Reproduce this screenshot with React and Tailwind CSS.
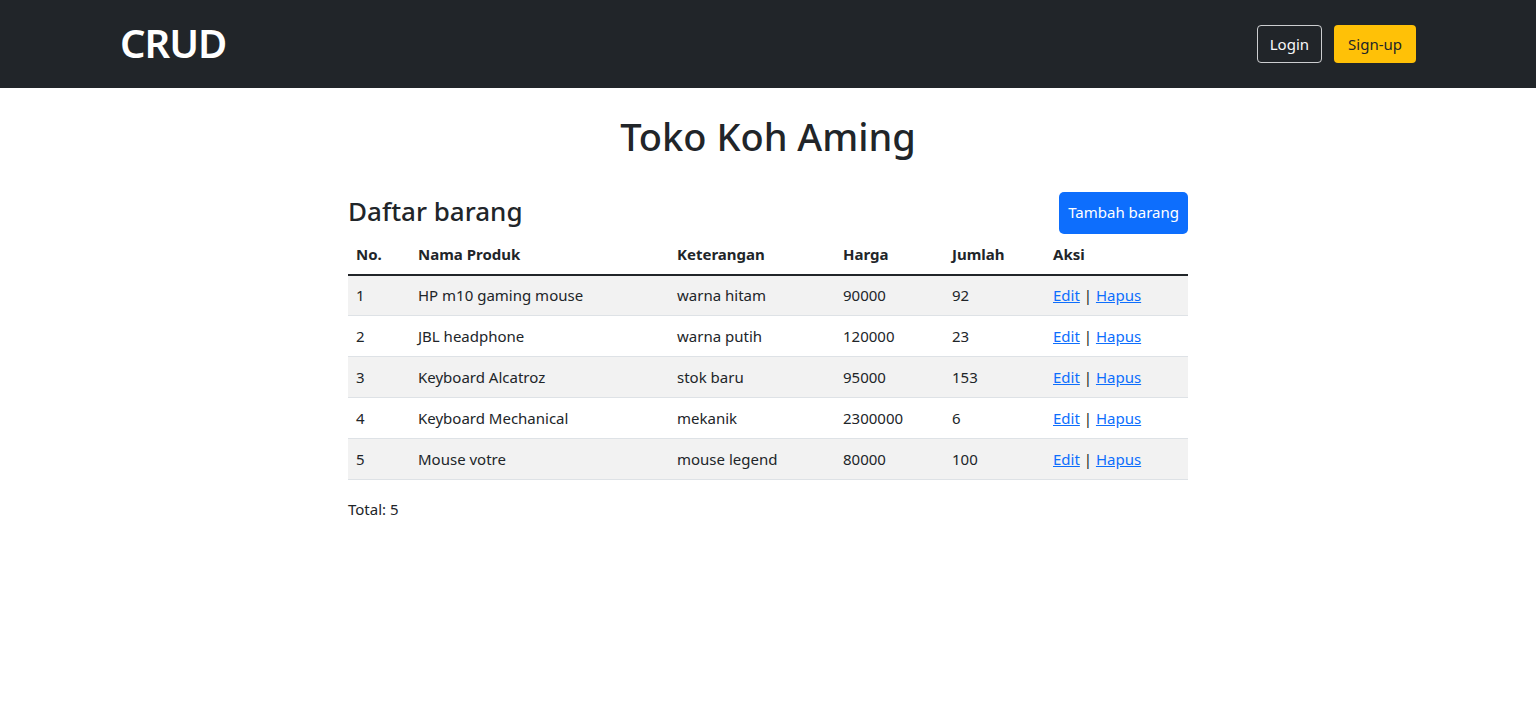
const ITEMS = [
  { nama: 'HP m10 gaming mouse', ket: 'warna hitam', harga: 90000, jumlah: 92 },
  { nama: 'JBL headphone', ket: 'warna putih', harga: 120000, jumlah: 23 },
  { nama: 'Keyboard Alcatroz', ket: 'stok baru', harga: 95000, jumlah: 153 },
  { nama: 'Keyboard Mechanical', ket: 'mekanik', harga: 2300000, jumlah: 6 },
  { nama: 'Mouse votre', ket: 'mouse legend', harga: 80000, jumlah: 100 },
]

export default function App() {
  return (
    <div className="min-h-[710px] bg-white text-[#212529] font-['Noto_Sans',sans-serif] text-[15px]">

      {/* Navbar */}
      <nav className="bg-[#212529] h-[88px]">
        <div className="w-[1296px] mx-auto h-full flex items-center justify-between">
          <span className="text-white text-[40px] font-semibold leading-none tracking-tight -mt-[3px]">CRUD</span>
          <div className="flex gap-3">
            <button className="h-[38px] px-3 rounded-[4px] border border-[#f8f9fa]/80 text-[#f8f9fa] text-[15px]">Login</button>
            <button className="h-[38px] px-[14px] rounded-[4px] bg-[#ffc107] text-[#212529] text-[15px]">Sign-up</button>
          </div>
        </div>
      </nav>

      {/* Content */}
      <main className="w-[840px] mx-auto">
        <h1 className="text-center text-[38px] font-medium leading-[1.2] mt-[26px] mb-[32px]">Toko Koh Aming</h1>

        <div className="flex items-end justify-between">
          <h3 className="text-[26px] font-medium leading-[1.2] mb-[6px]">Daftar barang</h3>
          <button className="h-[42px] px-[9px] rounded-[5px] bg-[#0d6efd] text-white text-[15px]">Tambah barang</button>
        </div>

        {/* Table */}
        <table className="w-full border-collapse text-left mt-[1px]">
          <thead>
            <tr className="h-[40px] border-b-2 border-[#212529]">
              <th className="w-[62px] px-2 font-bold">No.</th>
              <th className="w-[259px] px-2 font-bold">Nama Produk</th>
              <th className="w-[166px] px-2 font-bold">Keterangan</th>
              <th className="w-[109px] px-2 font-bold">Harga</th>
              <th className="w-[101px] px-2 font-bold">Jumlah</th>
              <th className="px-2 font-bold">Aksi</th>
            </tr>
          </thead>
          <tbody>
            {ITEMS.map((it, i) => (
              <tr key={i} className={`h-[41px] border-b border-[#dee2e6] ${i % 2 === 0 ? 'bg-[#f2f2f2]' : 'bg-white'}`}>
                <td className="px-2">{i + 1}</td>
                <td className="px-2">{it.nama}</td>
                <td className="px-2">{it.ket}</td>
                <td className="px-2">{it.harga}</td>
                <td className="px-2">{it.jumlah}</td>
                <td className="px-2">
                  <a href="#" className="text-[#0d6efd] underline">Edit</a> | <a href="#" className="text-[#0d6efd] underline">Hapus</a>
                </td>
              </tr>
            ))}
          </tbody>
        </table>

        <p className="mt-[18px]">Total: 5</p>
      </main>
    </div>
  )
}
